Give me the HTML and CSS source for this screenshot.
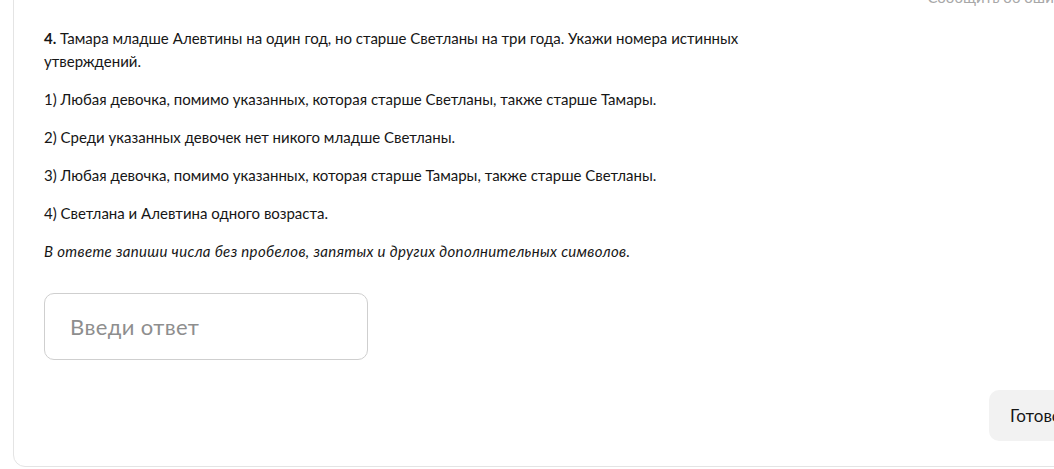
FILE: index.html
```html
<!DOCTYPE html>
<html lang="ru">
<head>
<meta charset="utf-8">
<link rel="stylesheet" href="styles.css">
</head>
<body>
<div class="card">
  <div class="card-head">
    <span class="report">Сообщить об ошибке</span>
  </div>
  <div class="question">
    <p><b>4.</b> Тамара младше Алевтины на один год, но старше Светланы на три года. Укажи номера истинных утверждений.</p>
    <p>1) Любая девочка, помимо указанных, которая старше Светланы, также старше Тамары.</p>
    <p>2) Среди указанных девочек нет никого младше Светланы.</p>
    <p>3) Любая девочка, помимо указанных, которая старше Тамары, также старше Светланы.</p>
    <p>4) Светлана и Алевтина одного возраста.</p>
    <p class="hint">В ответе запиши числа без пробелов, запятых и других дополнительных символов.</p>
  </div>
  <input class="answer" type="text" placeholder="Введи ответ">
  <div class="actions">
    <button class="done">Готово</button>
  </div>
</div>
</body>
</html>
```
FILE: styles.css
```css
html, body {
  margin: 0;
  padding: 0;
  background: #ffffff;
  overflow: hidden;
  height: 469px;
}
body {
  font-family: "Lato", "Noto Sans", sans-serif;
  color: #161616;
}
.card {
  box-sizing: border-box;
  margin-left: 13px;
  margin-top: -32px;
  width: 1127px;
  height: 499px;
  border: 1px solid #e4e4e4;
  border-radius: 12px;
  padding: 0 30px 0 30px;
  display: flex;
  flex-direction: column;
  align-items: flex-start;
}
.card-head {
  align-self: stretch;
  display: flex;
  justify-content: flex-end;
  height: 40px;
  padding-top: 18px;
  box-sizing: border-box;
}
.report {
  font-size: 15px;
  line-height: 20px;
  color: #a8a8a8;
  margin-right: 31px;
}
.question {
  max-width: 730px;
  margin-top: 18px;
  font-size: 15px;
  line-height: 23px;
}
.question p {
  margin: 0 0 15px 0;
}
.question p:last-child {
  margin-bottom: 0;
}
.question b {
  font-weight: 700;
}
.hint {
  font-style: italic;
  letter-spacing: 0.33px;
}
.answer {
  box-sizing: border-box;
  margin-top: 30px;
  width: 324px;
  height: 67px;
  border: 1px solid #cfcfcf;
  border-radius: 10px;
  padding: 0 25px;
  font-family: "Lato", "Noto Sans", sans-serif;
  font-size: 22px;
  letter-spacing: 0.4px;
  color: #161616;
  outline: none;
}
.answer::placeholder {
  color: #8e8e8e;
}
.actions {
  align-self: stretch;
  display: flex;
  justify-content: flex-end;
  margin-top: 30px;
}
.done {
  width: 120px;
  height: 51px;
  border: none;
  border-radius: 10px;
  background: #f2f2f2;
  font-family: "Lato", "Noto Sans", sans-serif;
  font-size: 17px;
  color: #161616;
  padding: 0 21px;
  text-align: left;
}
```
